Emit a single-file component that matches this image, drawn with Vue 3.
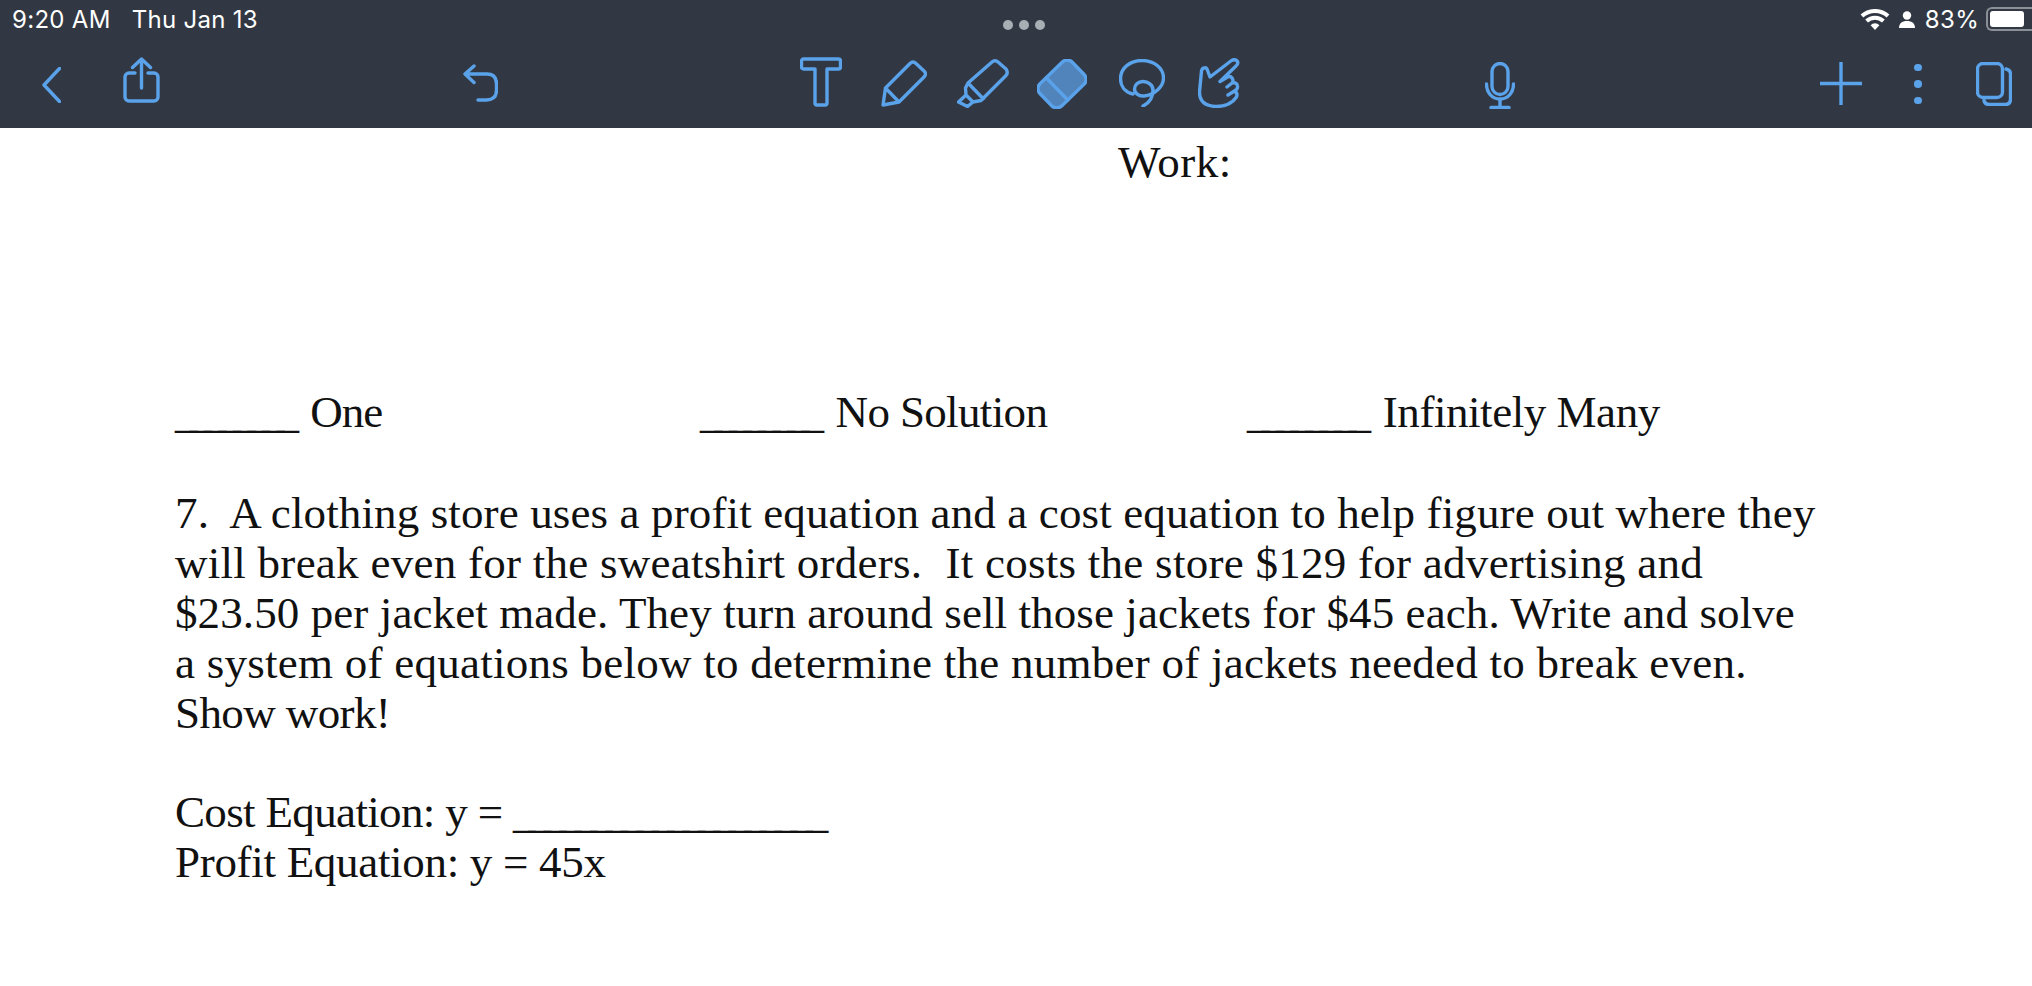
<script setup>
const problem = [
  { text: '7.  A clothing store uses a profit equation and a cost equation to help figure out where they', spacing: 0.13 },
  { text: 'will break even for the sweatshirt orders.  It costs the store $129 for advertising and', spacing: 0.27 },
  { text: '$23.50 per jacket made. They turn around sell those jackets for $45 each. Write and solve', spacing: 0.1 },
  { text: 'a system of equations below to determine the number of jackets needed to break even.', spacing: 0.25 },
  { text: 'Show work!', spacing: -0.6 }
]
</script>

<template>
  <div class="page">
    <header class="bar">
      <div class="status">
        <div class="status-left">
          <span>9:20 AM</span>
          <span>Thu Jan 13</span>
        </div>
        <div class="grabber"><i></i><i></i><i></i></div>
        <div class="status-right">
          <svg class="wifi" viewBox="0 0 28 20"><path d="M14 20l-4.200-4.600a6 6 0 0 1 8.400 0zM7.300 12.900l-2.600-2.800a13.500 13.500 0 0 1 18.600 0l-2.600 2.800a9.800 9.800 0 0 0-13.400 0zM2.900 8.100L.3 5.300a20.300 20.300 0 0 1 27.400 0l-2.600 2.800a16.500 16.500 0 0 0-22.200 0z" fill="#fff"/></svg>
          <svg class="person" viewBox="0 0 16 17"><circle cx="8" cy="4.500" r="4.200" fill="#fff"/><path d="M0 17c0-4.500 3-7 8-7s8 2.500 8 7z" fill="#fff"/></svg>
          <span class="percent">83%</span>
          <div class="battery"><div class="charge"></div></div>
        </div>
      </div>
      <nav class="tools">
        <svg class="back" viewBox="0 0 19 36"><path d="M17.500 1.500L2 18l15.500 16.500"/></svg>
        <svg class="share" viewBox="0 0 37 46"><path d="M12 16H6a4 4 0 0 0-4 4v20a4 4 0 0 0 4 4h25a4 4 0 0 0 4-4V20a4 4 0 0 0-4-4h-6M18.500 31V2M9.500 10.500l9-8.500 9 8.500"/></svg>
        <svg class="undo" viewBox="0 0 35 38"><path d="M2 10L11 2M2 10l9 8.500M2 10h22q9.500 0 9.500 10v6q0 10-10 10H15"/></svg>
        <svg class="text-tool" viewBox="0 0 42 50"><path d="M3.500 2h35a2 2 0 0 1 2 2v6a2 2 0 0 1-2 2H27v34a2 2 0 0 1-2 2h-8a2 2 0 0 1-2-2V12H3.500a2 2 0 0 1-2-2V4a2 2 0 0 1 2-2z"/></svg>
        <svg class="pencil" viewBox="0 0 46 47"><path d="M2 45l2.500-17L29 3.500q3-3 6 0l8 7.500q3 3 0 6L18 42zM4.500 28L18 42"/></svg>
        <svg class="highlighter" viewBox="0 0 52 49"><path d="M11 24L35 3q3-2.500 6 0l8 7q2.500 3.500 0 6.500L26 39.500zM11 24l-2.500 5 .5 7-7.500 7 9 4.500 5.500-4.500 8-1.500 2.500-2M9 36l7 7"/></svg>
        <svg class="eraser" viewBox="0 0 50 50"><g transform="translate(25 25) rotate(-44)"><rect class="fill" x="-22.500" y="-15.500" width="45" height="31" rx="7"/><path d="M-7-15.500V15.500"/></g></svg>
        <svg class="lasso" viewBox="0 0 46 48"><path d="M14 35C5 33 1.500 26 1.500 19.500 1.500 9 11 1.500 23 1.500S44.500 9 44.500 19c0 9-9.500 17-19.500 18-5.500.5-9.500-3-9.500-7 0-4 3.500-7.500 8.500-7.500 5 0 10 3.500 10 8.500 0 7-4 13-10 16"/></svg>
        <svg class="hand" viewBox="0 0 42 50"><path d="M12 19L33.500 2.500q4-2 6 1 1 2.500-1.500 4.500L22 23.500l6-3.500q4-3 6 0 2 3 0 5l-5 4M34 25q5-1 5.500 3 .5 3-3 5l-6.500 4M36.500 33q3.500 2 2 6-6.500 9.500-20.500 9.500Q1.500 48 1.500 34L3.500 13q.5-2.500 2.500-3 2-1 3 1l3 8"/></svg>
        <svg class="mic" viewBox="0 0 30 47"><rect x="7" y="1.500" width="16" height="31" rx="8"/><path d="M1.500 22c0 8 5 15 13.500 15s13.500-7 13.500-15M15 37v8.500M6 45.500h18"/></svg>
        <svg class="plus" viewBox="0 0 42 43"><path d="M21 0v43M0 21.500h42"/></svg>
        <div class="more"><i></i><i></i><i></i></div>
        <svg class="pages" viewBox="0 0 36 44"><rect x="1.500" y="1.500" width="25" height="34" rx="5.500"/><path d="M30 7q4.500 1 4.500 5v25q0 5.500-5.500 5.500H13q-4 0-5-4"/></svg>
      </nav>
    </header>

    <main class="doc">
      <p class="work">Work:</p>
      <div class="choices">
        <p class="one"><span class="blank">________</span> One</p>
        <p class="none"><span class="blank">________</span> No Solution</p>
        <p class="many"><span class="blank">________</span> Infinitely Many</p>
      </div>
      <div class="problem">
        <p v-for="line in problem" :key="line.text" :style="{ letterSpacing: line.spacing + 'px' }">{{ line.text }}</p>
      </div>
      <div class="equations">
        <p class="cost">Cost Equation: y = <span class="long-blank">____________________</span></p>
        <p class="profit">Profit Equation: y = 45x</p>
      </div>
    </main>
  </div>
</template>

<style>
html, body {
  margin: 0;
  background: #fff;
}
</style>

<style scoped>
.page {
  width: 2032px;
  height: 986px;
  overflow: hidden;
  background: #fff;
}
.bar {
  height: 128px;
  background: #323843;
}
.status {
  height: 40px;
  box-sizing: border-box;
  padding-bottom: 2px;
  display: grid;
  grid-template-columns: 1fr auto 1fr;
  align-items: center;
  color: #fff;
  font-family: Inter, "Noto Sans", sans-serif;
  font-size: 24px;
  letter-spacing: 0.3px;
}
.status-left {
  display: flex;
  gap: 21px;
  padding-left: 12px;
}
.grabber {
  display: flex;
  gap: 6px;
  margin: 12px 0 0 16px;
}
.grabber i {
  width: 10px;
  height: 10px;
  border-radius: 50%;
  background: #a9adb4;
}
.status-right {
  display: flex;
  justify-content: flex-end;
  align-items: center;
}
.wifi {
  width: 30px;
  height: 21px;
}
.person {
  width: 16px;
  height: 17px;
  margin-left: 9px;
}
.percent {
  margin-left: 10px;
}
.battery {
  box-sizing: border-box;
  width: 46px;
  height: 24px;
  margin-left: 7px;
  border: 2px solid #8b8f96;
  border-right: none;
  border-radius: 6px 0 0 6px;
  padding: 2px;
}
.charge {
  width: 34px;
  height: 16px;
  background: #fff;
  border-radius: 3px;
}
.tools {
  height: 88px;
  display: flex;
  align-items: center;
  padding-bottom: 2px;
  box-sizing: border-box;
}
.tools svg {
  flex: none;
  fill: none;
  stroke: #5aa2ea;
  stroke-width: 3.4;
  stroke-linecap: round;
  stroke-linejoin: round;
}
.tools svg .fill {
  fill: #5184bb;
}
.back { width: 19px; height: 36px; margin: 4px 0 0 42px; }
.share { width: 37px; height: 46px; margin: 0 0 7px 62px; }
.undo { width: 35px; height: 38px; margin-left: 303px; }
.text-tool { width: 42px; height: 50px; margin: 0 0 2px 302px; }
.pencil { width: 46px; height: 47px; margin-left: 39px; }
.highlighter { width: 52px; height: 49px; margin-left: 30px; }
.eraser { width: 50px; height: 50px; margin: 2px 0 0 28px; }
.lasso { width: 46px; height: 48px; margin-left: 32px; }
.hand { width: 42px; height: 50px; margin-left: 33px; }
.mic { width: 30px; height: 47px; margin: 5px 0 0 245px; }
.plus { width: 42px; height: 43px; margin-left: 305px; }
.more {
  display: flex;
  flex-direction: column;
  gap: 9px;
  margin: 2px 0 0 52px;
}
.more i {
  width: 7.5px;
  height: 7.5px;
  border-radius: 50%;
  background: #5aa2ea;
}
.pages { width: 36px; height: 44px; margin: 2px 0 0 54px; }

.doc {
  padding: 9px 0 0 175px;
  color: #111;
  font-family: "Liberation Serif", serif;
  font-size: 45px;
  line-height: 50px;
}
.doc p {
  margin: 0;
  white-space: pre;
}
.doc .work {
  margin-left: 943px;
  letter-spacing: 0.5px;
}
.choices {
  display: grid;
  grid-template-columns: 525px 547px auto;
  margin-top: 200px;
}
.one {
  letter-spacing: -1px;
}
.none {
  letter-spacing: -0.65px;
}
.many {
  letter-spacing: -0.45px;
}
.problem {
  margin-top: 51px;
}
.equations {
  margin-top: 49px;
}
.cost {
  letter-spacing: -0.65px;
}
.profit {
  letter-spacing: -0.3px;
}
.blank {
  letter-spacing: -8px;
  margin-right: 9px;
}
.long-blank {
  letter-spacing: -7.1px;
}
</style>
